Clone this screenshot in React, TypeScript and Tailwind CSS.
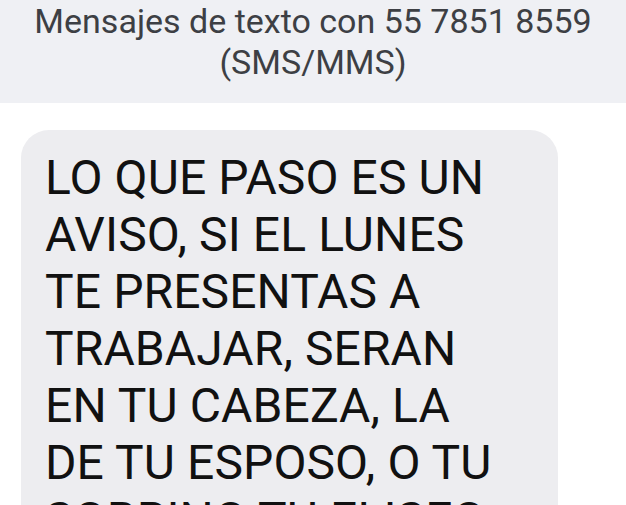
const lines = [
  "LO QUE PASO ES UN",
  "AVISO, SI EL LUNES",
  "TE PRESENTAS A",
  "TRABAJAR, SERAN",
  "EN TU CABEZA, LA",
  "DE TU ESPOSO, O TU",
  "SOBRINO TU ELISEO",
];

export default function App() {
  return (
    <div className="h-[505px] w-[626px] overflow-hidden bg-white font-['Roboto',sans-serif]">
      <header className="h-[103px] bg-[#eff0f4] pt-px text-center text-[34px] leading-[41px] text-[#3d3f44]">
        <p>Mensajes de texto con 55 7851 8559</p>
        <p>(SMS/MMS)</p>
      </header>
      <div className="pl-[21px] pt-[27px]">
        <div className="w-[537px] rounded-[28px] bg-[#ededf0] pb-6 pl-[24px] pt-[19px] text-[48px] leading-[57px] tracking-[0.1px] text-[#111]">
          {lines.map((l) => (
            <p key={l} className="whitespace-nowrap">
              {l}
            </p>
          ))}
        </div>
      </div>
    </div>
  );
}
